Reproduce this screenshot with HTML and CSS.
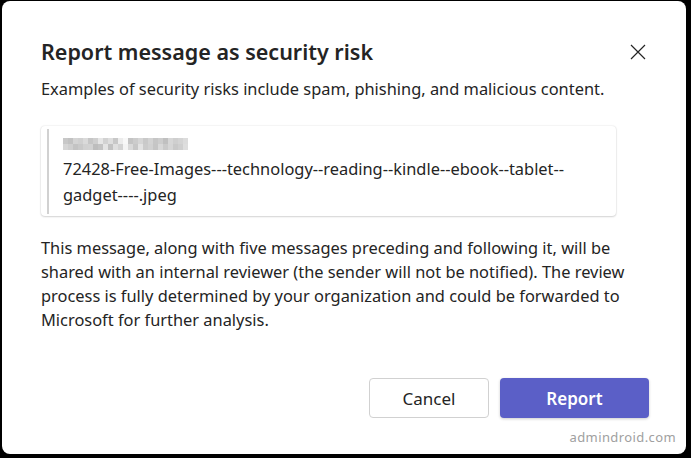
FILE: index.html
```html
<!DOCTYPE html>
<html lang="en">
<head>
  <meta charset="UTF-8" />
  <title>Report message as security risk</title>
  <link rel="stylesheet" href="styles.css">
</head>
<body>
  <div class="dialog">
    <div class="header">
      <div class="title">Report message as security risk</div>
      <button class="close" aria-label="Close">
        <svg width="16" height="16" viewBox="0 0 16 16"><path d="M1 1L15 15M15 1L1 15" stroke="#242424" stroke-width="1.2" fill="none"/></svg>
      </button>
    </div>
    <p class="intro">Examples of security risks include spam, phishing, and malicious content.</p>

    <div class="quote">
      <div class="sender" id="sender"></div>
      <div class="file">72428-Free-Images---technology--reading--kindle--ebook--tablet--gadget----.jpeg</div>
    </div>

    <p class="info">This message, along with five messages preceding and following it, will be shared with an internal reviewer (the sender will not be notified). The review process is fully determined by your organization and could be forwarded to Microsoft for further analysis.</p>

    <div class="actions">
      <button class="btn">Cancel</button>
      <button class="btn primary">Report</button>
    </div>
    <div class="mark">admindroid.com</div>
  </div>

  <script>
    // blurred sender name, drawn as a mosaic
    const shades = [
      "#c8c8c8","#c2c2c2","#d4d4d4","#d0d0d0","#dadada","#c6c6c6","#cfcfcf","#e6e6e6","#d2d2d2","#dedede","#c8c8c8","#ececec","#f8f8f8","#c4c4c4","#cccccc","#d6d6d6","#c9c9c9","#d3d3d3","#c6c6c6","#cdcdcd","#c0c0c0","#d7d7d7","#cfcfcf","#d4d4d4","#dcdcdc",
      "#d6d6d6","#cfcfcf","#c3c3c3","#c9c9c9","#d1d1d1","#d2d2d2","#bdbdbd","#c3c3c3","#e4e4e4","#c2c2c2","#dfdfdf","#d3d3d3","#f4f4f4","#dadada","#c7c7c7","#e3e3e3","#cbcbcb","#d1d1d1","#c5c5c5","#d8d8d8","#cacaca","#d6d6d6","#c9c9c9","#cfcfcf","#dedede"
    ];
    const sender = document.getElementById("sender");
    shades.forEach(c => {
      const cell = document.createElement("span");
      cell.style.background = c;
      sender.appendChild(cell);
    });
  </script>
</body>
</html>
```

FILE: styles.css
```css
body {
  margin: 0;
  background: #000;
  font-family: 'Noto Sans', sans-serif;
  color: #242424;
}
.dialog {
  width: 684px;
  height: 453px;
  margin: 1px 5px 4px 2px;
  background: #fff;
  border-radius: 8px;
  box-sizing: border-box;
  padding: 36px 39px 0 39px;
  position: relative;
}
.header {
  display: flex;
  justify-content: space-between;
  align-items: center;
  height: 30px;
}
.title {
  font-size: 21.5px;
  font-weight: 600;
  line-height: 30px;
}
.close {
  background: none;
  border: none;
  padding: 0;
  margin-right: 1px;
  width: 16px;
  height: 16px;
  cursor: pointer;
}
.intro {
  margin: 10px 0 0 0;
  font-size: 16.4px;
  line-height: 24px;
}
.quote {
  margin-top: 25px;
  width: 575px;
  box-sizing: border-box;
  border-radius: 4px;
  background: #fff;
  box-shadow: 0 0 2px rgba(0,0,0,0.14), 0 1px 2px rgba(0,0,0,0.14);
  padding: 10px 22px 8px 22px;
  position: relative;
}
.quote::before {
  content: "";
  position: absolute;
  left: 6px;
  top: 3px;
  bottom: 2px;
  width: 2px;
  background: #d1d1d1;
}
.sender {
  display: grid;
  grid-template-columns: repeat(25, 5px);
  grid-auto-rows: 6px;
  margin: 2px 0 6px 0;
  filter: blur(0.4px);
}
.file {
  font-size: 16.4px;
  line-height: 26px;
}
.info {
  margin: 20px 0 0 0;
  font-size: 16.4px;
  line-height: 24px;
}
.actions {
  display: flex;
  justify-content: flex-end;
  gap: 11px;
  margin-top: 46px;
  margin-right: -2px;
}
.btn {
  height: 40px;
  width: 120px;
  border: 1px solid #d1d1d1;
  border-radius: 4px;
  background: #fff;
  color: #242424;
  font-family: 'Noto Sans', sans-serif;
  font-size: 17px;
  cursor: pointer;
}
.primary {
  width: 149px;
  border: none;
  background: #5b5fc7;
  color: #fff;
  font-weight: 600;
  box-shadow: 0 1px 3px rgba(0,0,0,0.2);
}
.mark {
  position: absolute;
  right: 10px;
  bottom: 8px;
  font-size: 13px;
  letter-spacing: 0.4px;
  color: #a0a0a0;
}
```
